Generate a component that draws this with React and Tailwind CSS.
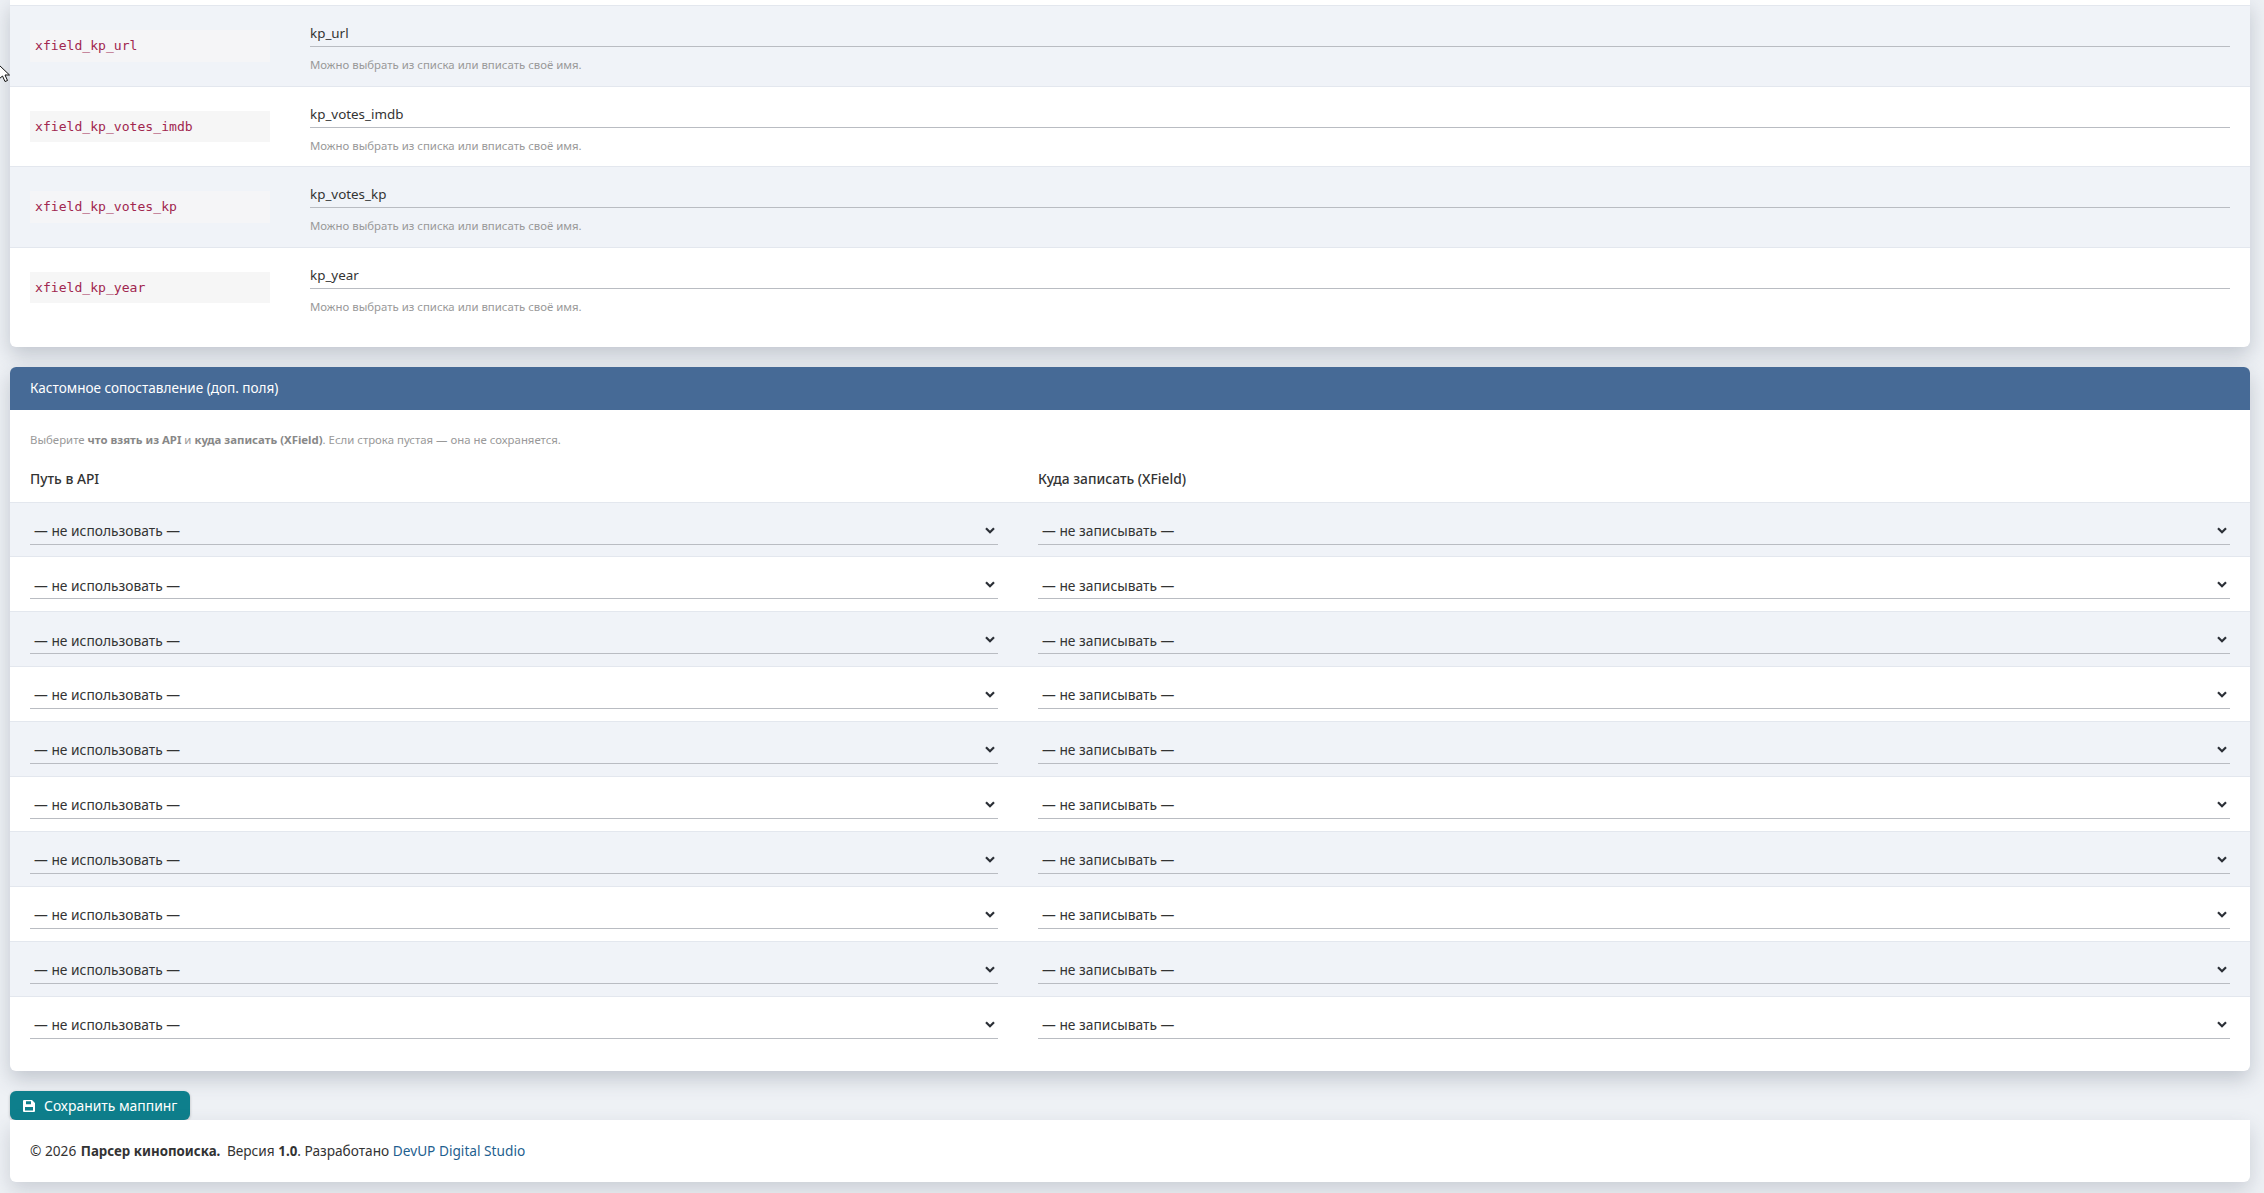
const font = { fontFamily: '"Noto Sans", "Open Sans", sans-serif' };

const fieldRows = [
  { key: 'xfield_kp_url', value: 'kp_url' },
  { key: 'xfield_kp_votes_imdb', value: 'kp_votes_imdb' },
  { key: 'xfield_kp_votes_kp', value: 'kp_votes_kp' },
  { key: 'xfield_kp_year', value: 'kp_year' },
];

function Chevron() {
  return (
    <svg width="10" height="7" viewBox="0 0 10 7" className="text-[#2b2f36]">
      <path d="M1 1.2 5 5.2 9 1.2" fill="none" stroke="currentColor" strokeWidth="2.200" />
    </svg>
  );
}

function FakeSelect({ label }) {
  return (
    <div className="flex items-center justify-between h-[30px] pl-1 pr-[3px] pt-[2px] border-b border-[#b9bcc2] text-[13.800px] text-[#333]">
      <span className="mt-[2px]">{label}</span>
      <Chevron />
    </div>
  );
}

function FieldRow({ row, striped }) {
  return (
    <div className={`flex h-[80.6px] pl-5 pr-5 border-t border-[#e3e7ee] ${striped ? 'bg-[#f0f3f8]' : 'bg-white'}`}>
      <div className="w-[240px] shrink-0 pt-[24px]">
        <code className={`block h-[31.500px] leading-[31.500px] px-[5px] text-[13.100px] text-[#a1264f] ${striped ? 'bg-[#f5f5f7]' : 'bg-[#f6f6f6]'}`} style={{ fontFamily: '"DejaVu Sans Mono", monospace' }}>
          {row.key}
        </code>
      </div>
      <div className="flex-1 ml-[40px] pt-[16px]">
        <div className="h-[25px] leading-[22px] text-[13.400px] text-[#333] border-b border-[#b9bcc2]">{row.value}</div>
        <p className="mt-[10px] text-[11.400px] leading-[16px] text-[#999]">Можно выбрать из списка или вписать своё имя.</p>
      </div>
    </div>
  );
}

function MapRow({ striped }) {
  return (
    <div className={`flex gap-[40px] h-[54.900px] px-5 pt-[12px] border-t border-[#e3e7ee] ${striped ? 'bg-[#f0f3f8]' : 'bg-white'}`}>
      <div className="w-[968px] shrink-0"><FakeSelect label="— не использовать —" /></div>
      <div className="flex-1"><FakeSelect label="— не записывать —" /></div>
    </div>
  );
}

export default function App() {
  return (
    <div className="relative h-[1193px] overflow-hidden bg-[#eef1f5] pl-[10px] pr-[14px] text-[#333]" style={font}>
      <div className="bg-white rounded-b-md shadow-[0_8px_20px_rgba(60,70,90,0.25)]">
        <div className="h-[5px]" />
        {fieldRows.map((row, i) => (
          <FieldRow key={row.key} row={row} striped={i % 2 === 0} />
        ))}
        <div className="h-[20px]" />
      </div>

      <div className="mt-[20px] bg-white rounded-md shadow-[0_8px_20px_rgba(60,70,90,0.25)]">
        <div className="h-[43px] leading-[42px] px-5 rounded-t-md bg-[#466a96] text-[13.550px] text-white">Кастомное сопоставление (доп. поля)</div>
        <p className="pt-[22px] px-5 text-[11.400px] leading-[16px] text-[#999]">
          Выберите <b className="text-[#888]">что взять из API</b> и <b className="text-[#888]">куда записать (XField)</b>. Если строка пустая — она не сохраняется.
        </p>
        <div className="flex gap-[40px] px-5 pt-[22px] h-[53.200px] text-[13.800px] font-medium leading-[18px] text-[#333]">
          <div className="w-[968px] shrink-0">Путь в API</div>
          <div>Куда записать (XField)</div>
        </div>
        {Array.from({ length: 10 }, (_, i) => (
          <MapRow key={i} striped={i % 2 === 0} />
        ))}
        <div className="h-[20.400px]" />
      </div>

      <button className="mt-[20px] flex items-center gap-[9px] h-[29px] w-[180px] pl-[13px] pt-[2px] rounded-md bg-[#0e7f8c] text-[13.900px] text-white shadow-[0_1px_3px_rgba(0,0,0,0.25)]">
        <svg width="12" height="12" viewBox="0 0 12 12">
          <path fillRule="evenodd" d="M1 0h8l3 3v8a1 1 0 0 1-1 1H1a1 1 0 0 1-1-1V1a1 1 0 0 1 1-1zM3 1.300v3h5v-3zM2 7v3.500h8V7z" fill="currentColor" />
        </svg>
        Сохранить маппинг
      </button>

      <div className="h-[62px] leading-[62px] px-5 bg-white rounded-b-md shadow-[0_8px_20px_rgba(60,70,90,0.2)] text-[13.680px] text-[#333]">
        © 2026 <b className="text-[13.300px] ml-[1px] mr-[3px]">Парсер кинопоиска.</b> Версия <b className="text-[13.300px]">1.0</b>. Разработано <span className="text-[#1f5f8f]">DevUP Digital Studio</span>
      </div>

      <svg width="12" height="19" viewBox="0 0 12 19" className="absolute left-[-2px] top-[64px]">
        <path d="M1 1v14l3.500-3 2.500 5.500 2.500-1-2.500-5.500h4.500z" fill="#fff" stroke="#111" strokeWidth="1" />
      </svg>
    </div>
  );
}
